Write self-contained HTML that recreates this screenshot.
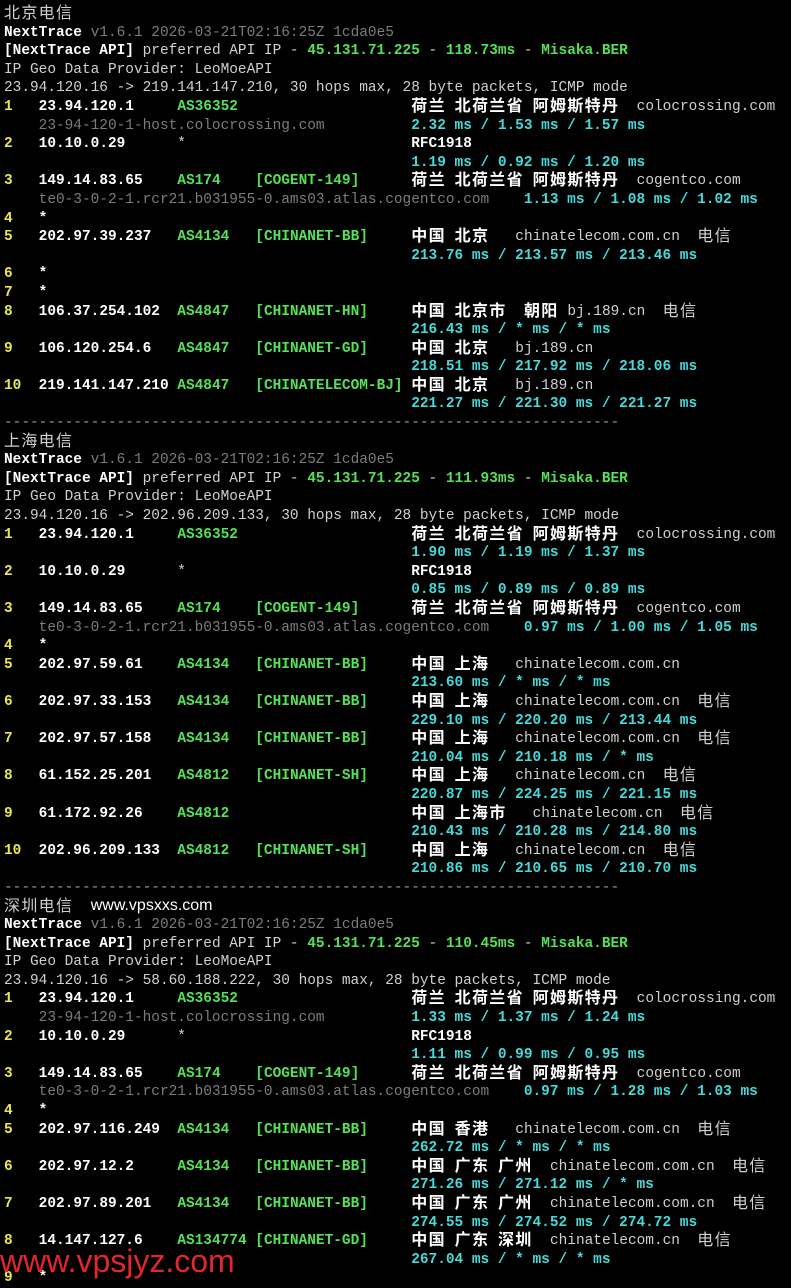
<!DOCTYPE html>
<html><head><meta charset="utf-8">
<style>
html,body{margin:0;padding:0;background:#000;}
body{width:791px;height:1280px;overflow:hidden;position:relative;}
#t{position:absolute;left:4px;top:5px;font-family:"Liberation Mono",monospace;font-size:14.45px;color:#d0d0d0;}
#t div{height:18.6px;line-height:18.6px;white-space:pre;}
.y{color:#e8e84a;font-weight:bold}
.w{color:#fff;font-weight:bold}
.g{color:#55e055;font-weight:bold}
.cy{color:#45dada;font-weight:bold}
.gr{color:#7c7c7c}
.d{color:#9a9a9a}
.c,.cw{letter-spacing:1.34px;font-size:16px;font-family:"Noto Sans CJK SC",sans-serif;line-height:0;vertical-align:-1px}
.cw{color:#fff;font-weight:bold}
.site{font-family:"Liberation Sans",sans-serif;color:#fff;font-size:16px;line-height:0}
#wm{position:absolute;left:0px;top:1243px;font-family:"Liberation Sans",sans-serif;font-size:32px;color:#e3262a;line-height:36px;}
</style></head><body>
<div id="t">
<div><span class="c">北京电信</span></div>
<div><span class="w">NextTrace</span> <span class="gr">v1.6.1 2026-03-21T02:16:25Z 1cda0e5</span></div>
<div><span class="w">[NextTrace API]</span> preferred API IP - <span class="g">45.131.71.225</span> - <span class="g">118.73ms</span> - <span class="g">Misaka.BER</span></div>
<div>IP Geo Data Provider: LeoMoeAPI</div>
<div>23.94.120.16 -&gt; 219.141.147.210, 30 hops max, 28 byte packets, ICMP mode</div>
<div><span class="y">1</span>   <span class="w">23.94.120.1</span>     <span class="g">AS36352</span>                    <span class="cw">荷兰</span> <span class="cw">北荷兰省</span> <span class="cw">阿姆斯特丹</span>  colocrossing.com</div>
<div>    <span class="gr">23-94-120-1-host.colocrossing.com</span>          <span class="cy">2.32 ms / 1.53 ms / 1.57 ms</span></div>
<div><span class="y">2</span>   <span class="w">10.10.0.29</span>      *                          <span class="w">RFC1918</span></div>
<div>                                               <span class="cy">1.19 ms / 0.92 ms / 1.20 ms</span></div>
<div><span class="y">3</span>   <span class="w">149.14.83.65</span>    <span class="g">AS174</span>    <span class="g">[COGENT-149]</span>      <span class="cw">荷兰</span> <span class="cw">北荷兰省</span> <span class="cw">阿姆斯特丹</span>  cogentco.com</div>
<div>    <span class="gr">te0-3-0-2-1.rcr21.b031955-0.ams03.atlas.cogentco.com</span>    <span class="cy">1.13 ms / 1.08 ms / 1.02 ms</span></div>
<div><span class="y">4</span>   <span class="w">*</span></div>
<div><span class="y">5</span>   <span class="w">202.97.39.237</span>   <span class="g">AS4134</span>   <span class="g">[CHINANET-BB]</span>     <span class="cw">中国</span> <span class="cw">北京</span>   chinatelecom.com.cn  <span class="c">电信</span></div>
<div>                                               <span class="cy">213.76 ms / 213.57 ms / 213.46 ms</span></div>
<div><span class="y">6</span>   <span class="w">*</span></div>
<div><span class="y">7</span>   <span class="w">*</span></div>
<div><span class="y">8</span>   <span class="w">106.37.254.102</span>  <span class="g">AS4847</span>   <span class="g">[CHINANET-HN]</span>     <span class="cw">中国</span> <span class="cw">北京市</span>  <span class="cw">朝阳</span> bj.189.cn  <span class="c">电信</span></div>
<div>                                               <span class="cy">216.43 ms / * ms / * ms</span></div>
<div><span class="y">9</span>   <span class="w">106.120.254.6</span>   <span class="g">AS4847</span>   <span class="g">[CHINANET-GD]</span>     <span class="cw">中国</span> <span class="cw">北京</span>   bj.189.cn</div>
<div>                                               <span class="cy">218.51 ms / 217.92 ms / 218.06 ms</span></div>
<div><span class="y">10</span>  <span class="w">219.141.147.210</span> <span class="g">AS4847</span>   <span class="g">[CHINATELECOM-BJ]</span> <span class="cw">中国</span> <span class="cw">北京</span>   bj.189.cn</div>
<div>                                               <span class="cy">221.27 ms / 221.30 ms / 221.27 ms</span></div>
<div class="d">-----------------------------------------------------------------------</div>
<div><span class="c">上海电信</span></div>
<div><span class="w">NextTrace</span> <span class="gr">v1.6.1 2026-03-21T02:16:25Z 1cda0e5</span></div>
<div><span class="w">[NextTrace API]</span> preferred API IP - <span class="g">45.131.71.225</span> - <span class="g">111.93ms</span> - <span class="g">Misaka.BER</span></div>
<div>IP Geo Data Provider: LeoMoeAPI</div>
<div>23.94.120.16 -&gt; 202.96.209.133, 30 hops max, 28 byte packets, ICMP mode</div>
<div><span class="y">1</span>   <span class="w">23.94.120.1</span>     <span class="g">AS36352</span>                    <span class="cw">荷兰</span> <span class="cw">北荷兰省</span> <span class="cw">阿姆斯特丹</span>  colocrossing.com</div>
<div>                                               <span class="cy">1.90 ms / 1.19 ms / 1.37 ms</span></div>
<div><span class="y">2</span>   <span class="w">10.10.0.29</span>      *                          <span class="w">RFC1918</span></div>
<div>                                               <span class="cy">0.85 ms / 0.89 ms / 0.89 ms</span></div>
<div><span class="y">3</span>   <span class="w">149.14.83.65</span>    <span class="g">AS174</span>    <span class="g">[COGENT-149]</span>      <span class="cw">荷兰</span> <span class="cw">北荷兰省</span> <span class="cw">阿姆斯特丹</span>  cogentco.com</div>
<div>    <span class="gr">te0-3-0-2-1.rcr21.b031955-0.ams03.atlas.cogentco.com</span>    <span class="cy">0.97 ms / 1.00 ms / 1.05 ms</span></div>
<div><span class="y">4</span>   <span class="w">*</span></div>
<div><span class="y">5</span>   <span class="w">202.97.59.61</span>    <span class="g">AS4134</span>   <span class="g">[CHINANET-BB]</span>     <span class="cw">中国</span> <span class="cw">上海</span>   chinatelecom.com.cn</div>
<div>                                               <span class="cy">213.60 ms / * ms / * ms</span></div>
<div><span class="y">6</span>   <span class="w">202.97.33.153</span>   <span class="g">AS4134</span>   <span class="g">[CHINANET-BB]</span>     <span class="cw">中国</span> <span class="cw">上海</span>   chinatelecom.com.cn  <span class="c">电信</span></div>
<div>                                               <span class="cy">229.10 ms / 220.20 ms / 213.44 ms</span></div>
<div><span class="y">7</span>   <span class="w">202.97.57.158</span>   <span class="g">AS4134</span>   <span class="g">[CHINANET-BB]</span>     <span class="cw">中国</span> <span class="cw">上海</span>   chinatelecom.com.cn  <span class="c">电信</span></div>
<div>                                               <span class="cy">210.04 ms / 210.18 ms / * ms</span></div>
<div><span class="y">8</span>   <span class="w">61.152.25.201</span>   <span class="g">AS4812</span>   <span class="g">[CHINANET-SH]</span>     <span class="cw">中国</span> <span class="cw">上海</span>   chinatelecom.cn  <span class="c">电信</span></div>
<div>                                               <span class="cy">220.87 ms / 224.25 ms / 221.15 ms</span></div>
<div><span class="y">9</span>   <span class="w">61.172.92.26</span>    <span class="g">AS4812</span>                     <span class="cw">中国</span> <span class="cw">上海市</span>   chinatelecom.cn  <span class="c">电信</span></div>
<div>                                               <span class="cy">210.43 ms / 210.28 ms / 214.80 ms</span></div>
<div><span class="y">10</span>  <span class="w">202.96.209.133</span>  <span class="g">AS4812</span>   <span class="g">[CHINANET-SH]</span>     <span class="cw">中国</span> <span class="cw">上海</span>   chinatelecom.cn  <span class="c">电信</span></div>
<div>                                               <span class="cy">210.86 ms / 210.65 ms / 210.70 ms</span></div>
<div class="d">-----------------------------------------------------------------------</div>
<div><span class="c">深圳电信</span>  <span class="site">www.vpsxxs.com</span></div>
<div><span class="w">NextTrace</span> <span class="gr">v1.6.1 2026-03-21T02:16:25Z 1cda0e5</span></div>
<div><span class="w">[NextTrace API]</span> preferred API IP - <span class="g">45.131.71.225</span> - <span class="g">110.45ms</span> - <span class="g">Misaka.BER</span></div>
<div>IP Geo Data Provider: LeoMoeAPI</div>
<div>23.94.120.16 -&gt; 58.60.188.222, 30 hops max, 28 byte packets, ICMP mode</div>
<div><span class="y">1</span>   <span class="w">23.94.120.1</span>     <span class="g">AS36352</span>                    <span class="cw">荷兰</span> <span class="cw">北荷兰省</span> <span class="cw">阿姆斯特丹</span>  colocrossing.com</div>
<div>    <span class="gr">23-94-120-1-host.colocrossing.com</span>          <span class="cy">1.33 ms / 1.37 ms / 1.24 ms</span></div>
<div><span class="y">2</span>   <span class="w">10.10.0.29</span>      *                          <span class="w">RFC1918</span></div>
<div>                                               <span class="cy">1.11 ms / 0.99 ms / 0.95 ms</span></div>
<div><span class="y">3</span>   <span class="w">149.14.83.65</span>    <span class="g">AS174</span>    <span class="g">[COGENT-149]</span>      <span class="cw">荷兰</span> <span class="cw">北荷兰省</span> <span class="cw">阿姆斯特丹</span>  cogentco.com</div>
<div>    <span class="gr">te0-3-0-2-1.rcr21.b031955-0.ams03.atlas.cogentco.com</span>    <span class="cy">0.97 ms / 1.28 ms / 1.03 ms</span></div>
<div><span class="y">4</span>   <span class="w">*</span></div>
<div><span class="y">5</span>   <span class="w">202.97.116.249</span>  <span class="g">AS4134</span>   <span class="g">[CHINANET-BB]</span>     <span class="cw">中国</span> <span class="cw">香港</span>   chinatelecom.com.cn  <span class="c">电信</span></div>
<div>                                               <span class="cy">262.72 ms / * ms / * ms</span></div>
<div><span class="y">6</span>   <span class="w">202.97.12.2</span>     <span class="g">AS4134</span>   <span class="g">[CHINANET-BB]</span>     <span class="cw">中国</span> <span class="cw">广东</span> <span class="cw">广州</span>  chinatelecom.com.cn  <span class="c">电信</span></div>
<div>                                               <span class="cy">271.26 ms / 271.12 ms / * ms</span></div>
<div><span class="y">7</span>   <span class="w">202.97.89.201</span>   <span class="g">AS4134</span>   <span class="g">[CHINANET-BB]</span>     <span class="cw">中国</span> <span class="cw">广东</span> <span class="cw">广州</span>  chinatelecom.com.cn  <span class="c">电信</span></div>
<div>                                               <span class="cy">274.55 ms / 274.52 ms / 274.72 ms</span></div>
<div><span class="y">8</span>   <span class="w">14.147.127.6</span>    <span class="g">AS134774</span> <span class="g">[CHINANET-GD]</span>     <span class="cw">中国</span> <span class="cw">广东</span> <span class="cw">深圳</span>  chinatelecom.cn  <span class="c">电信</span></div>
<div>                                               <span class="cy">267.04 ms / * ms / * ms</span></div>
<div><span class="y">9</span>   <span class="w">*</span></div>
</div>
<div id="wm">www.vpsjyz.com</div>
</body></html>
